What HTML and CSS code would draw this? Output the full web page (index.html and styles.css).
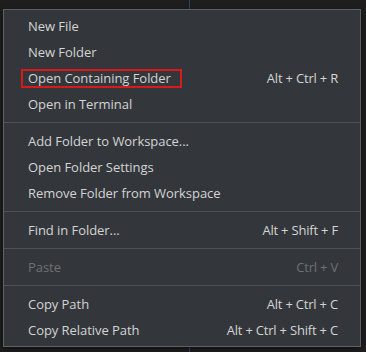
FILE: index.html
```html
<!DOCTYPE html>
<html>
<head>
<meta charset="utf-8">
<link rel="stylesheet" href="styles.css">
</head>
<body>
<div class="guide"></div>
<div class="menu">
  <div class="item"><span class="label">New File</span></div>
  <div class="item"><span class="label">New Folder</span></div>
  <div class="item"><span class="label highlight">Open Containing Folder</span><span class="key">Alt + Ctrl + R</span></div>
  <div class="item"><span class="label">Open in Terminal</span></div>
  <div class="sep"></div>
  <div class="item"><span class="label">Add Folder to Workspace...</span></div>
  <div class="item"><span class="label">Open Folder Settings</span></div>
  <div class="item"><span class="label">Remove Folder from Workspace</span></div>
  <div class="sep"></div>
  <div class="item"><span class="label">Find in Folder...</span><span class="key">Alt + Shift + F</span></div>
  <div class="sep"></div>
  <div class="item disabled"><span class="label">Paste</span><span class="key">Ctrl + V</span></div>
  <div class="sep"></div>
  <div class="item"><span class="label">Copy Path</span><span class="key">Alt + Ctrl + C</span></div>
  <div class="item"><span class="label">Copy Relative Path</span><span class="key">Alt + Ctrl + Shift + C</span></div>
</div>
</body>
</html>
```
FILE: styles.css
```css
html, body {
  margin: 0;
  padding: 0;
  background: #1e1e1e;
  font-family: "Open Sans", "Noto Sans", sans-serif;
  font-size: 13px;
  color: #d4d4d4;
}
body {
  position: relative;
  height: 352px;
  overflow: hidden;
}
.guide {
  position: absolute;
  left: 189px;
  top: 0;
  width: 1px;
  height: 352px;
  background: #26476a;
}
.menu {
  position: relative;
  box-sizing: border-box;
  margin: 9px 0 0 3px;
  width: 358px;
  height: 338px;
  background: #33373b;
  border: 1px solid #5e6063;
  padding: 3px 0;
  box-shadow: 0 2px 6px rgba(0,0,0,0.5);
}
.item {
  display: flex;
  align-items: center;
  justify-content: space-between;
  height: 26px;
  padding: 0 22px 0 24px;
}
.label {
  white-space: nowrap;
  letter-spacing: -0.05px;
}
.key {
  white-space: nowrap;
  letter-spacing: -0.2px;
}
.highlight {
  display: inline-flex;
  align-items: center;
  box-sizing: border-box;
  width: 161px;
  height: 19px;
  margin-left: -7px;
  padding-left: 5px;
  border: 2px solid #d81a1a;
}
.disabled {
  color: #6e7174;
}
.sep {
  height: 1px;
  margin: 5px 0;
  background: #4e5256;
}
```
